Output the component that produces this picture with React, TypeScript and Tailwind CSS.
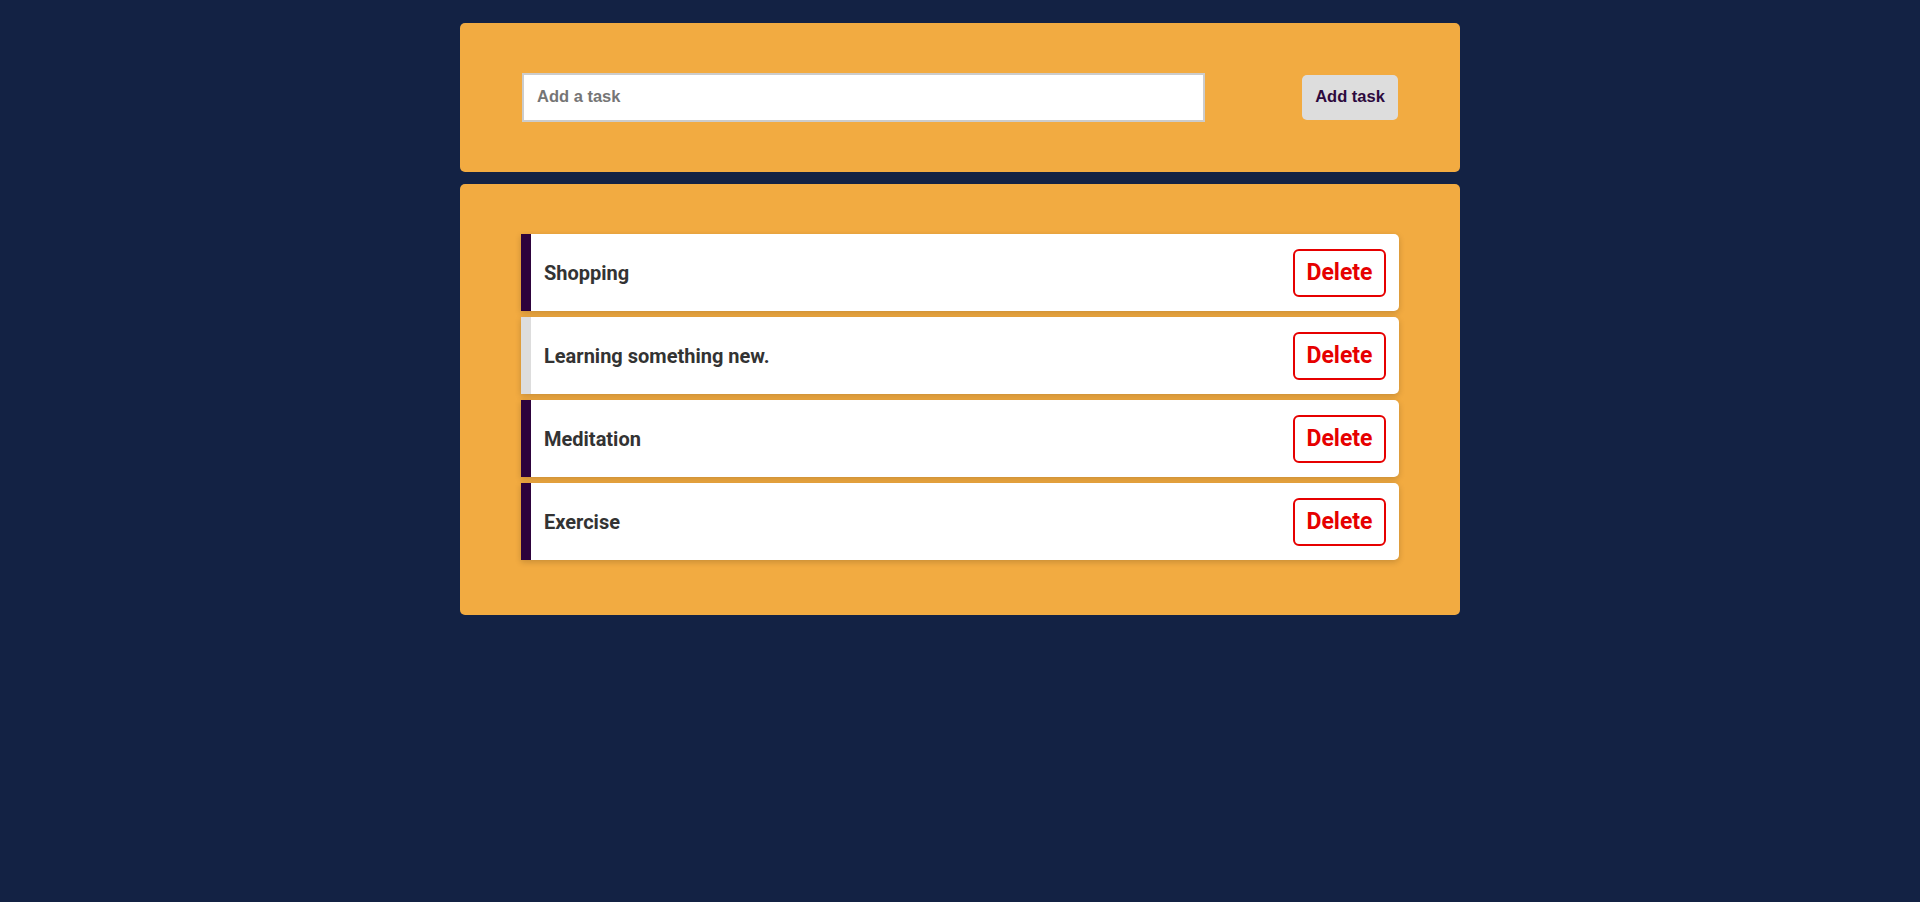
import React from "react";

const tasks = [
  { name: "Shopping", done: false },
  { name: "Learning something new.", done: true },
  { name: "Meditation", done: false },
  { name: "Exercise", done: false },
];

export default function App() {
  return (
    <div className="min-h-[902px] w-full bg-[#132244] pt-[23px]">
      <div className="mx-auto flex w-[1000px] flex-col gap-[12px]">
        <div className="flex items-center justify-between rounded-[5px] bg-[#f2ab41] px-[62px] py-[50px]">
          <input
            type="text"
            placeholder="Add a task"
            className="h-[49px] w-[683px] border-2 border-[#cccccc] bg-white px-[13px] pb-[2px] text-[16.5px] font-bold text-[#333] outline-none placeholder:text-[#757575]"
            style={{ fontFamily: '"Liberation Sans", Arial, sans-serif' }}
          />
          <button
            className="h-[45px] w-[96px] rounded-[5px] bg-[#dddddd] pb-[2px] text-[16.5px] font-bold text-[#2d0a3e]"
            style={{ fontFamily: '"Liberation Sans", Arial, sans-serif' }}
          >
            Add task
          </button>
        </div>
        <div className="flex flex-col rounded-[5px] bg-[#f2ab41] px-[61px] pt-[50px] pb-[49px]">
          {tasks.map((t) => (
            <div
              key={t.name}
              className={
                "mb-[6px] flex h-[77px] items-center justify-between rounded-r-[5px] border-l-[10px] bg-white pr-[13px] pl-[13px] shadow-[0_2px_6px_rgba(0,0,0,0.18)] " +
                (t.done ? "border-[#dddddd]" : "border-[#2d023c]")
              }
              style={{ fontFamily: "Roboto, sans-serif" }}
            >
              <span className="text-[20px] font-bold text-[#333333]">{t.name}</span>
              <button className="h-[48px] w-[93px] rounded-[6px] border-2 border-[#e60000] bg-white pt-[2px] text-[23px] font-bold text-[#e60000]">
                Delete
              </button>
            </div>
          ))}
        </div>
      </div>
    </div>
  );
}
